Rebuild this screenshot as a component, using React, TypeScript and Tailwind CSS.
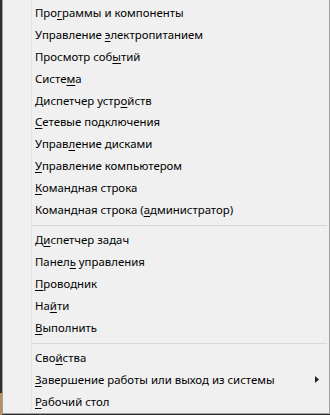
type Item = { pre: string; key: string; post: string; arrow?: boolean };

const groups: Item[][] = [
  [
    { pre: "Про", key: "г", post: "раммы и компоненты" },
    { pre: "Управление ", key: "э", post: "лектропитанием" },
    { pre: "Просмотр соб", key: "ы", post: "тий" },
    { pre: "Систе", key: "м", post: "а" },
    { pre: "Диспетчер устр", key: "о", post: "йств" },
    { pre: "", key: "С", post: "етевые подключения" },
    { pre: "Управ", key: "л", post: "ение дисками" },
    { pre: "", key: "У", post: "правление компьютером" },
    { pre: "", key: "К", post: "омандная строка" },
    { pre: "Командная строка (", key: "а", post: "дминистратор)" },
  ],
  [
    { pre: "Д", key: "и", post: "спетчер задач" },
    { pre: "Панел", key: "ь", post: " управления" },
    { pre: "", key: "П", post: "роводник" },
    { pre: "На", key: "й", post: "ти" },
    { pre: "", key: "В", post: "ыполнить" },
  ],
  [
    { pre: "Сво", key: "й", post: "ства" },
    { pre: "", key: "З", post: "авершение работы или выход из системы", arrow: true },
    { pre: "", key: "Р", post: "абочий стол" },
  ],
];

const MenuRow = ({ item }: { item: Item }) => (
  <div className="h-[21.8px] flex items-center pl-[32px] pr-[10px]">
    <span className="flex-1 whitespace-nowrap">
      {item.pre}
      <span className="underline underline-offset-[2px]">{item.key}</span>
      {item.post}
    </span>
    {item.arrow && (
      <svg width="4" height="7" viewBox="0 0 4 7">
        <path d="M0 0 L4 3.5 L0 7 Z" fill="#222" />
      </svg>
    )}
  </div>
);

export default function App() {
  return (
    <div
      className="w-[330px] h-[415px] flex bg-[#2b2b2b] overflow-hidden"
      style={{ fontFamily: '"Noto Sans", "Open Sans", sans-serif' }}
    >
      <div className="w-[2px] flex flex-col">
        <div className="flex-1 bg-[#2e2e2e]" />
        <div className="h-[22px] bg-[#b8905a]" />
      </div>
      <div className="flex-1 h-[414px] bg-[#f0f0f0] border-l border-r border-b border-[#a0a0a0] relative text-[11.4px] text-black">
        <div className="absolute left-[28px] top-0 bottom-[2px] w-px bg-[#e2e2e2]" />
        <div className="pt-[2px]">
          {groups.map((g, gi) => (
            <div key={gi}>
              {gi > 0 && (
                <div className="pt-[5px] pb-[3px] pl-[28px] pr-[2px]">
                  <div className="h-px bg-[#d7d7d7]" />
                </div>
              )}
              {g.map((item, i) => (
                <MenuRow key={i} item={item} />
              ))}
            </div>
          ))}
        </div>
      </div>
    </div>
  );
}
